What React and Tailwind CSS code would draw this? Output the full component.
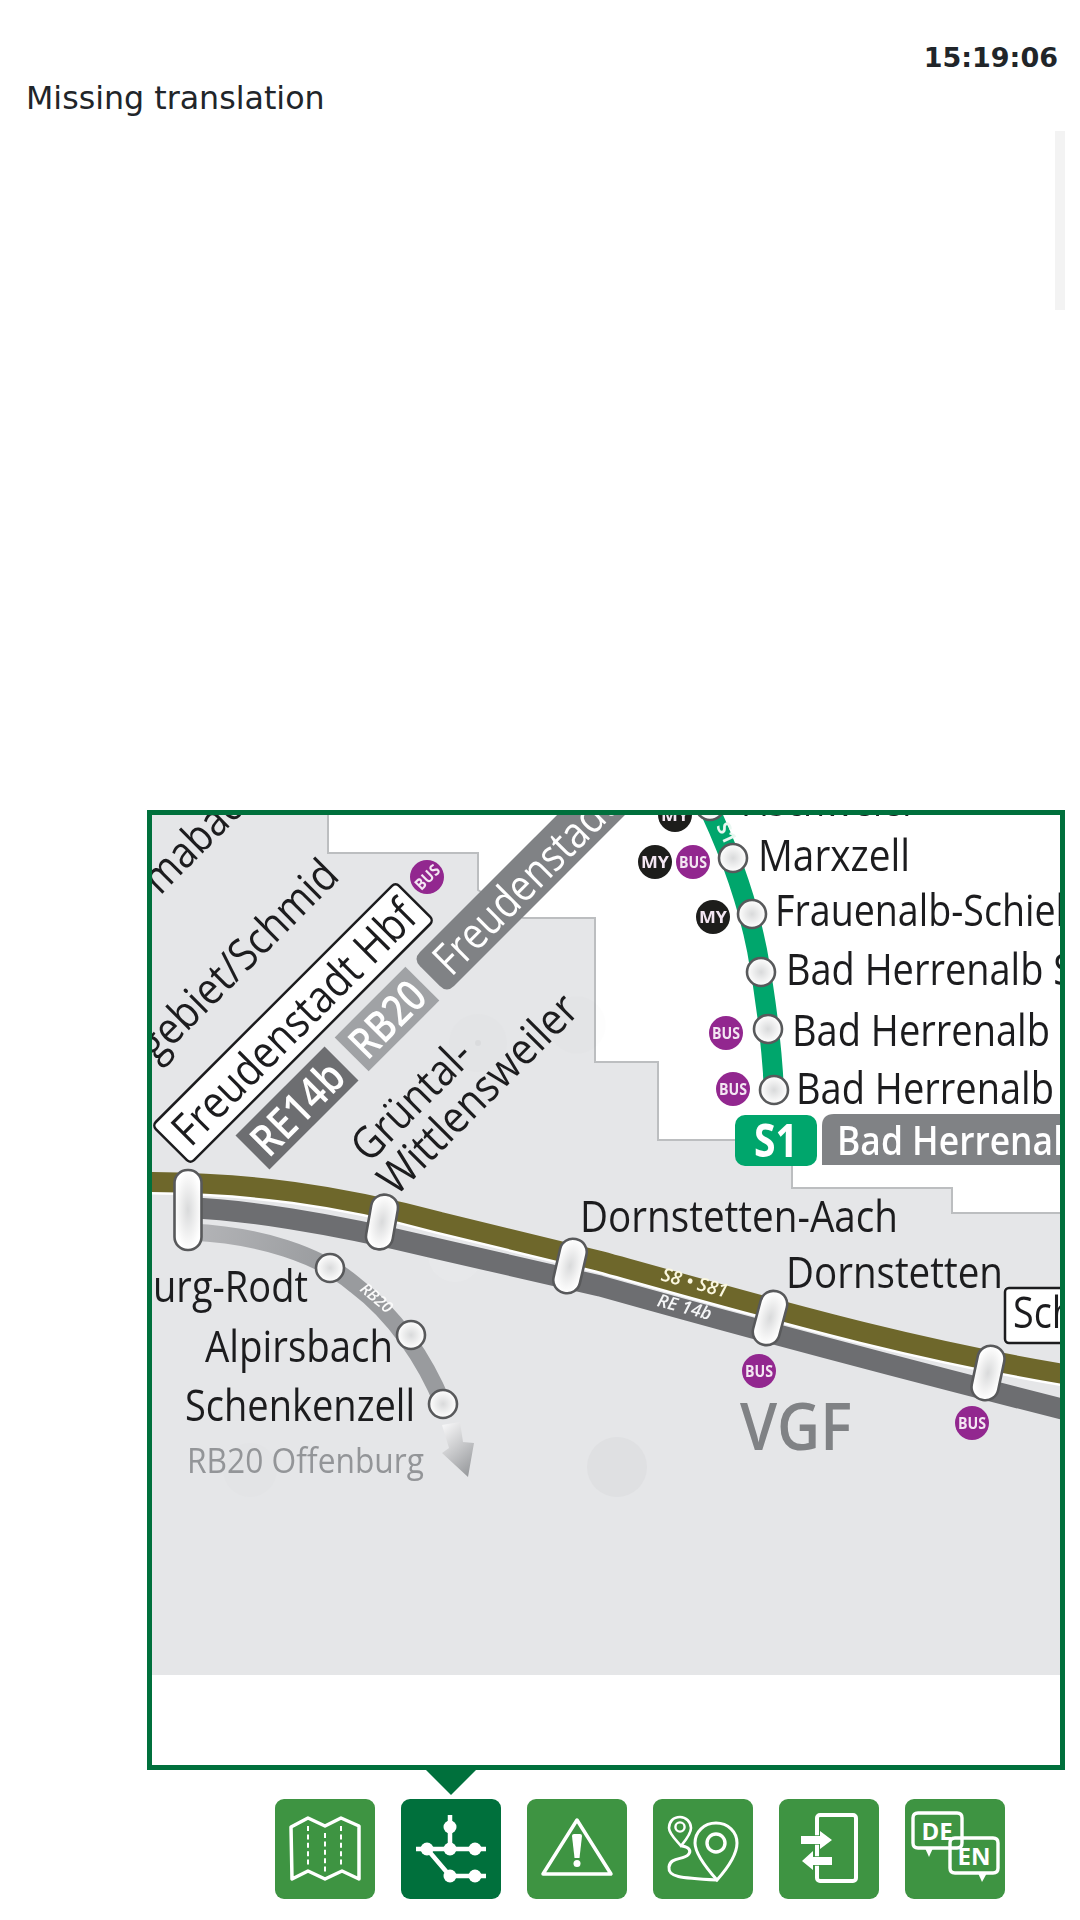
import React from "react";

const GREEN = "#00a66c";
const INK = "#1c1c1e";
const OLIVE_PATH = "M140 1182C250 1182 340 1195 440 1222L600 1261C760 1305 900 1347 1070 1375";

const Stop = ({ x, y, r = 14 }) => (
  <circle cx={x} cy={y} r={r} fill="url(#stopFill)" stroke="#58595b" strokeWidth="2.6" />
);

const Halt = ({ x, y, h = 55, rot = 13 }) => (
  <rect
    x={x - 13.5}
    y={y - h / 2}
    width="27"
    height={h}
    rx="13"
    fill="url(#stopFill)"
    stroke="#58595b"
    strokeWidth="2.6"
    transform={`rotate(${rot} ${x} ${y})`}
  />
);

const Badge = ({ x, y, label = "BUS", fill = "#92278f", rot = 0 }) => (
  <g transform={`translate(${x} ${y}) rotate(${rot})`}>
    <circle r="17" fill={fill} />
    <text y="6" textAnchor="middle" fontSize="16" fontWeight="700" fill="#f3e6f2" textLength="28" lengthAdjust="spacingAndGlyphs">
      {label}
    </text>
  </g>
);

const Label = ({ x, y, w, children, size = 44, fill = INK, weight = 400 }) => (
  <text x={x} y={y} fontSize={size} fontWeight={weight} fill={fill} textLength={w} lengthAdjust="spacingAndGlyphs">
    {children}
  </text>
);

const Slanted = ({ x, y, w, children, size = 44, fill = INK, weight = 400, rot = -45 }) => (
  <g transform={`translate(${x} ${y}) rotate(${rot})`}>
    <text fontSize={size} fontWeight={weight} fill={fill} textLength={w} lengthAdjust="spacingAndGlyphs">
      {children}
    </text>
  </g>
);

const TransitMap = () => (
  <svg viewBox="152 815 908 950" className="block w-full h-full font-['Open_Sans',sans-serif] blur-[0.6px]">
    <defs>
      <radialGradient id="stopFill">
        <stop offset="0" stopColor="#d9dadb" />
        <stop offset="0.75" stopColor="#f6f6f6" />
        <stop offset="1" stopColor="#ffffff" />
      </radialGradient>
      <linearGradient id="arrowFill" x1="0.2" y1="0" x2="0.7" y2="1">
        <stop offset="0" stopColor="#f4f4f5" />
        <stop offset="1" stopColor="#9a9c9f" />
      </linearGradient>
      <linearGradient id="rbFill" gradientUnits="userSpaceOnUse" x1="190" y1="1232" x2="330" y2="1268">
        <stop offset="0" stopColor="#b4b5b8" />
        <stop offset="1" stopColor="#999b9e" />
      </linearGradient>
    </defs>

    <rect x="152" y="815" width="908" height="950" fill="#ffffff" />
    {/* tariff zone */}
    <path
      d="M140 805H328V853H478V890L523 918H595V1062H658V1140H792V1188H952V1213H1070V1690H140Z"
      fill="#e5e6e8"
      stroke="#bcbec0"
      strokeWidth="2"
    />
    <rect x="140" y="1675" width="930" height="100" fill="#ffffff" />

    {/* faint pin marks */}
    <circle cx="617" cy="1467" r="30" fill="#dfe0e2" />
    <circle cx="455" cy="1255" r="27" fill="#ffffff" fillOpacity="0.1" />
    <circle cx="478" cy="1043" r="29" fill="#e3e4e6" />
    <circle cx="478" cy="1043" r="3" fill="#dadbdd" />
    <circle cx="577" cy="1025" r="29" fill="#000000" fillOpacity="0.006" />
    <circle cx="250" cy="1470" r="27" fill="#e3e4e6" />

    {/* main lines */}
    <path d="M190 1232C260 1235 320 1255 355 1285C395 1315 425 1360 443 1404" fill="none" stroke="url(#rbFill)" strokeWidth="17" />
    <path d="M188 1208C240 1209 330 1223 430 1247L600 1286C760 1331 900 1368 1070 1411" fill="none" stroke="#6d6e71" strokeWidth="21" />
    <path d={OLIVE_PATH} transform="translate(0 2.5)" fill="none" stroke="#ffffff" strokeWidth="20" />
    <path d={OLIVE_PATH} fill="none" stroke="#6e672b" strokeWidth="20" />

    <text transform="translate(693 1289) rotate(15)" textAnchor="middle" fontSize="19" fontStyle="italic" fontWeight="600" fill="#fbf8e0">S8 • S81</text>
    <text transform="translate(683 1313) rotate(15)" textAnchor="middle" fontSize="18" fontStyle="italic" fontWeight="600" fill="#f4f5f6">RE 14b</text>
    <text transform="translate(373 1302) rotate(40)" textAnchor="middle" fontSize="16" fontStyle="italic" fontWeight="600" fill="#fafafa">RB20</text>

    <Halt x={188} y={1210} h={80} rot={0} />
    <Halt x={382} y={1222} rot={10} />
    <Halt x={570} y={1266} rot={13} />
    <Halt x={770} y={1318} rot={15} />
    <Halt x={988} y={1373} rot={12} />

    <Stop x={330} y={1268} />
    <Stop x={411} y={1335} />
    <Stop x={443} y={1404} />

    {/* S1 */}
    <path d="M705 800C722 835 745 890 757 950C768 1010 772 1050 774 1090" fill="none" stroke={GREEN} strokeWidth="20" />
    <text transform="translate(716 826) rotate(65)" fontSize="19" fontWeight="700" fill="#e9f7f1">S1</text>
    <Stop x={710} y={806} />
    <Stop x={733} y={858} />
    <Stop x={752} y={914} />
    <Stop x={761} y={972} />
    <Stop x={768} y={1029} />
    <Stop x={774} y={1090} />

    <Badge x={675} y={815} label="MY" fill="#1d1d1b" />
    <Badge x={655} y={862} label="MY" fill="#1d1d1b" />
    <Badge x={693} y={862} />
    <Badge x={713} y={917} label="MY" fill="#1d1d1b" />
    <Badge x={726} y={1033} />
    <Badge x={733} y={1089} />
    <Badge x={427} y={877} rot={-45} />
    <Badge x={759} y={1371} />
    <Badge x={972} y={1423} />

    <Label x={741} y={816} w={176}>Fischweier</Label>
    <Label x={758} y={871} w={152}>Marxzell</Label>
    <Label x={775} y={926} w={290}>Frauenalb-Schiel</Label>
    <Label x={786} y={985} w={288}>Bad Herrenalb S</Label>
    <Label x={792} y={1046} w={258}>Bad Herrenalb</Label>
    <Label x={796} y={1104} w={258}>Bad Herrenalb</Label>

    <rect x="735" y="1115" width="82" height="51" rx="10" fill={GREEN} />
    <text x="776" y="1157" textAnchor="middle" fontSize="46" fontWeight="700" fill="#ffffff" textLength="44" lengthAdjust="spacingAndGlyphs">S1</text>
    <path d="M1070 1114H834Q822 1114 822 1126V1165H1070Z" fill="#808285" />
    <Label x={837} y={1155} w={226} size={40} fill="#ffffff" weight={600}>Bad Herrenal</Label>

    {/* slanted signs */}
    <g transform="translate(293 1023) rotate(-45)">
      <rect x="-172" y="-27" width="344" height="54" rx="5" fill="#ffffff" stroke={INK} strokeWidth="2.5" />
      <text x="-161" y="16" fontSize="45" fill={INK} textLength="324" lengthAdjust="spacingAndGlyphs">Freudenstadt Hbf</text>
    </g>
    <g transform="translate(297 1108) rotate(-45)">
      <rect x="-63" y="-24" width="126" height="48" fill="#6d6e71" />
      <text y="16" textAnchor="middle" fontSize="44" fontWeight="600" fill="#ffffff" textLength="112" lengthAdjust="spacingAndGlyphs">RE14b</text>
    </g>
    <g transform="translate(387 1019) rotate(-45)">
      <rect x="-50" y="-24" width="100" height="48" fill="#a0a2a5" />
      <text y="16" textAnchor="middle" fontSize="44" fontWeight="600" fill="#ffffff" textLength="88" lengthAdjust="spacingAndGlyphs">RB20</text>
    </g>
    <g transform="translate(437 969) rotate(-45)">
      <path d="M0 -24H300V24H0Q-10 24 -10 14V-14Q-10 -24 0 -24Z" fill="#808285" />
      <text x="4" y="16" fontSize="44" fontWeight="500" fill="#ffffff" textLength="236" lengthAdjust="spacingAndGlyphs">Freudenstadt</text>
    </g>

    <Slanted x={160} y={896} w={125}>mabad</Slanted>
    <Slanted x={156} y={1063} w={262}>gebiet/Schmid</Slanted>
    <Slanted x={369} y={1164} w={150}>Grüntal-</Slanted>
    <Slanted x={396} y={1197} w={262}>Wittlensweiler</Slanted>

    <Label x={153} y={1302} w={155}>urg-Rodt</Label>
    <Label x={205} y={1362} w={188}>Alpirsbach</Label>
    <Label x={185} y={1421} w={230}>Schenkenzell</Label>
    <Label x={187} y={1473} w={237} size={35} fill="#939598">RB20 Offenburg</Label>
    <path d="M442 1425L460 1422L463 1442L474 1443L468 1477L442 1453L449 1448Z" fill="url(#arrowFill)" />

    <Label x={580} y={1232} w={318}>Dornstetten-Aach</Label>
    <Label x={786} y={1288} w={217}>Dornstetten</Label>
    <rect x="1005" y="1288" width="80" height="55" rx="4" fill="#ffffff" stroke={INK} strokeWidth="2.5" />
    <Label x={1013} y={1328} w={62}>Sch</Label>
    <text x="740" y="1450" fontSize="66" fontWeight="600" fill="#808285" textLength="112" lengthAdjust="spacingAndGlyphs">VGF</text>
  </svg>
);

const MapIcon = () => (
  <svg viewBox="0 0 100 100" className="w-full h-full" fill="none" stroke="#fff">
    <path d="M16 28L33 19L50 27L66 19L84 27V80L67 72L50 80L33 72L17 80Z" strokeWidth="3.5" strokeLinejoin="round" />
    <path d="M33 27V66M50 34V74M66 27V66" strokeWidth="2" strokeDasharray="5 3.4" />
  </svg>
);

const LinesIcon = () => (
  <svg viewBox="0 0 100 100" className="w-full h-full" fill="#fff" stroke="#fff">
    <path d="M49 16V50M15 50H85M26 50L49 77H85" fill="none" strokeWidth="4.5" />
    <circle cx="49" cy="28" r="6.5" stroke="none" />
    <circle cx="26" cy="50" r="6.5" stroke="none" />
    <circle cx="49" cy="50" r="6.5" stroke="none" />
    <circle cx="74" cy="50" r="6.5" stroke="none" />
    <circle cx="49" cy="77" r="6.5" stroke="none" />
    <circle cx="74" cy="77" r="6.5" stroke="none" />
  </svg>
);

const WarningIcon = () => (
  <svg viewBox="0 0 100 100" className="w-full h-full">
    <path d="M50 21L84 75H16Z" fill="none" stroke="#fff" strokeWidth="3.5" strokeLinejoin="round" />
    <path d="M45 37Q45 35 47 35H53Q55 35 55 37L52.5 59H47.5Z" fill="#fff" />
    <circle cx="50" cy="64.5" r="3.5" fill="#fff" />
  </svg>
);

const RouteIcon = () => (
  <svg viewBox="0 0 100 100" className="w-full h-full" fill="none" stroke="#fff" strokeWidth="3">
    <path d="M27 18C20 18 16 23 16 29C16 35 24 42 28 47C32 42 38 35 38 29C38 23 33 18 27 18Z" strokeWidth="2.6" />
    <circle cx="27" cy="28" r="4.6" strokeWidth="2.4" />
    <path d="M63 24C51 24 42 33 42 44C42 56 56 72 64 81C72 72 84 56 84 44C84 33 75 24 63 24Z" />
    <circle cx="63" cy="44" r="9" strokeWidth="3.4" />
    <path d="M29 47C36 48 39 52 35 56C30 61 17 58 16 68C15 78 26 79 64 81" />
  </svg>
);

const TransferIcon = () => (
  <svg viewBox="0 0 100 100" className="w-full h-full">
    <rect x="38" y="16" width="39" height="66" rx="3" fill="none" stroke="#fff" strokeWidth="4" />
    <path d="M22 37H41V32L53 41L41 50V45H22Z" fill="#fff" stroke="#3e9442" strokeWidth="1.5" paintOrder="stroke" />
    <path d="M34 52V58H53V66H34V71L23 62Z" fill="#fff" stroke="#3e9442" strokeWidth="1.5" paintOrder="stroke" />
  </svg>
);

const LanguageIcon = () => (
  <svg viewBox="0 0 100 100" className="w-full h-full font-['Open_Sans',sans-serif]" fill="none" stroke="#fff" strokeWidth="3.4">
    <path d="M13 14H52Q57 14 57 19V44Q57 49 52 49H13Q8 49 8 44V19Q8 14 13 14Z" />
    <path d="M20 49H28L24 58Z" fill="#fff" stroke="none" />
    <path d="M50 39H88Q93 39 93 44V69Q93 74 88 74H50Q45 74 45 69V44Q45 39 50 39Z" />
    <path d="M73 74H82L77 83Z" fill="#fff" stroke="none" />
    <text x="32" y="41" textAnchor="middle" fontSize="24" fontWeight="700" fill="#fff" stroke="none">DE</text>
    <text x="69" y="66" textAnchor="middle" fontSize="24" fontWeight="700" fill="#fff" stroke="none">EN</text>
  </svg>
);

const tabs = [
  { id: "map", icon: <MapIcon /> },
  { id: "lines", icon: <LinesIcon />, active: true },
  { id: "warning", icon: <WarningIcon /> },
  { id: "route", icon: <RouteIcon /> },
  { id: "transfer", icon: <TransferIcon /> },
  { id: "language", icon: <LanguageIcon /> },
];

const App = () => {
  return (
    <div className="w-[1080px] h-[1920px] bg-white overflow-hidden font-['DejaVu_Sans',sans-serif]">
      <div className="pt-[42px] pr-[22px] text-right text-[27px] leading-[32px] font-bold text-[#212529]">15:19:06</div>
      <div className="pl-[26px] mt-[8px] text-[31.7px] leading-[32px] text-[#212529]">Missing translation</div>
      <div className="flex justify-end pr-[15px] mt-[17px]">
        <div className="w-[10px] h-[179px] bg-[#f3f3f3]"></div>
      </div>
      <div className="ml-[147px] mt-[500px] w-[918px] h-[960px] border-[5px] border-[#00703c] overflow-hidden">
        <TransitMap />
      </div>
      <div className="flex gap-[26px] ml-[275px] mt-[29px]">
        {tabs.map((tab) => (
          <button
            key={tab.id}
            className={`relative w-[100px] h-[100px] rounded-[9px] ${tab.active ? "bg-[#00703c]" : "bg-[#3e9442]"}`}
          >
            {tab.icon}
            {tab.active && (
              <span className="absolute left-[25px] top-[-29px] w-0 h-0 border-x-[25px] border-x-transparent border-t-[25px] border-t-[#00703c]"></span>
            )}
          </button>
        ))}
      </div>
    </div>
  );
};

export default App;
